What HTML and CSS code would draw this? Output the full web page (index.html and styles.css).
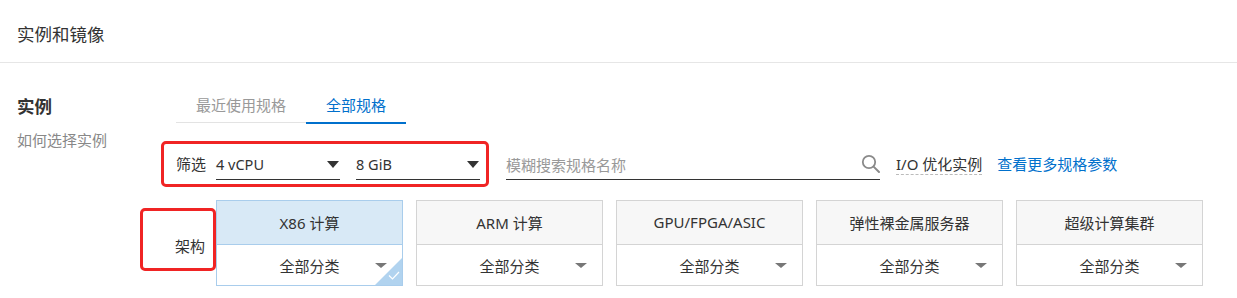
FILE: index.html
```html
<!DOCTYPE html>
<html lang="zh">
<head>
<meta charset="utf-8">
<title>实例和镜像</title>
<link rel="stylesheet" href="styles.css">
</head>
<body>
<header class="page-header">实例和镜像</header>
<main class="main">
  <aside class="side">
    <div class="side-title">实例</div>
    <div class="side-sub">如何选择实例</div>
  </aside>
  <section class="content">
    <nav class="tabs">
      <span class="tab">最近使用规格</span>
      <span class="tab active">全部规格</span>
    </nav>
    <div class="filter-row">
      <div class="filter-box">
        <span class="filter-label">筛选</span>
        <div class="select"><span>4 vCPU</span><i class="caret"></i></div>
        <div class="select"><span>8 GiB</span><i class="caret"></i></div>
      </div>
      <div class="search">
        <span class="placeholder">模糊搜索规格名称</span>
        <svg class="search-icon" width="20" height="20" viewBox="0 0 20 20"><circle cx="8" cy="8" r="6.2" fill="none" stroke="#8a8a8a" stroke-width="1.8"/><line x1="12.6" y1="12.6" x2="18" y2="18" stroke="#8a8a8a" stroke-width="2" stroke-linecap="round"/></svg>
      </div>
      <span class="io-link">I/O 优化实例</span>
      <span class="more-link">查看更多规格参数</span>
    </div>
    <div class="arch-row">
      <div class="arch-label">架构</div>
      <div class="cards">
        <div class="card selected">
          <div class="card-top">X86 计算</div>
          <div class="card-bottom"><span>全部分类</span><i class="caret small"></i></div>
          <span class="corner"><svg width="12" height="9" viewBox="0 0 12 9"><polyline points="1,4.5 4.5,8 11,1" fill="none" stroke="#fff" stroke-width="1.2"/></svg></span>
        </div>
        <div class="card">
          <div class="card-top">ARM 计算</div>
          <div class="card-bottom"><span>全部分类</span><i class="caret small"></i></div>
        </div>
        <div class="card">
          <div class="card-top">GPU/FPGA/ASIC</div>
          <div class="card-bottom"><span>全部分类</span><i class="caret small"></i></div>
        </div>
        <div class="card">
          <div class="card-top">弹性裸金属服务器</div>
          <div class="card-bottom"><span>全部分类</span><i class="caret small"></i></div>
        </div>
        <div class="card">
          <div class="card-top">超级计算集群</div>
          <div class="card-bottom"><span>全部分类</span><i class="caret small"></i></div>
        </div>
      </div>
    </div>
  </section>
</main>
</body>
</html>
```

FILE: styles.css
```css
* { box-sizing: border-box; }
html, body { margin: 0; padding: 0; background: #fff; }
body {
  font-family: "Segoe UI", "Noto Sans", "Noto Sans CJK SC", sans-serif;
  font-size: 15px;
  color: #333;
  width: 1237px;
  height: 298px;
  overflow: hidden;
}
.page-header {
  height: 63px;
  padding: 21px 0 0 17px;
  font-size: 17.5px;
  line-height: 26px;
  color: #333;
  border-bottom: 1px solid #e6e6e6;
}
.main { display: flex; }
.side { width: 176px; padding-left: 17px; padding-top: 30px; }
.side-title { font-size: 17.5px; font-weight: bold; line-height: 26px; color: #333; }
.side-sub { margin-top: 11px; font-size: 15px; line-height: 20px; color: #888; }
.content { flex: 1; padding-top: 25px; }
.tabs {
  display: flex;
  width: 230px;
  border-bottom: 1px solid #e3e3e3;
  height: 35px;
}
.tab {
  padding: 0 20px;
  line-height: 34px;
  height: 36px;
  color: #999;
  font-size: 15px;
}
.tab.active { color: #0070cc; border-bottom: 2px solid #0070cc; }
.filter-row {
  display: flex;
  align-items: center;
  margin-top: 18px;
  height: 46px;
}
.filter-box {
  display: flex;
  align-items: center;
  height: 46px;
  margin-left: -15px;
  padding: 0 6px 0 12px;
  border: 3px solid #f02424;
  border-radius: 5px;
}
.filter-label { margin-right: 10px; font-size: 15px; color: #333; padding-bottom: 2px; }
.select {
  width: 124px;
  height: 28px;
  margin-top: 4px;
  display: flex;
  align-items: center;
  justify-content: space-between;
  border-bottom: 1px solid #333;
  padding-bottom: 3px;
  font-size: 14.5px;
  color: #333;
}
.select + .select { margin-left: 16px; }
.caret {
  display: inline-block;
  width: 0; height: 0;
  border-left: 6.5px solid transparent;
  border-right: 6.5px solid transparent;
  border-top: 7px solid #333;
  margin-right: 1px;
}
.caret.small { border-left-width: 6px; border-right-width: 6px; border-top-width: 5px; border-top-color: #777; }
.search {
  margin-left: 17px;
  width: 374px;
  height: 28px;
  margin-top: 4px;
  border-bottom: 1.5px solid #333;
  display: flex;
  align-items: center;
  justify-content: space-between;
  padding-bottom: 3px;
}
.placeholder { color: #999; font-size: 15px; }
.search-icon { margin-right: -1px; }
.io-link {
  margin-left: 16px;
  font-size: 15px;
  color: #333;
  border-bottom: 1px dashed #bbb;
  line-height: 20px;
  margin-top: 0;
}
.more-link { margin-left: 15px; color: #0070cc; font-size: 15px; padding-bottom: 2px; }
.arch-row { display: flex; margin-top: 13px; }
.arch-label {
  width: 76px;
  height: 63px;
  margin-left: -36px;
  margin-top: 8px;
  border: 3px solid #f02424;
  border-radius: 5px;
  display: flex;
  align-items: flex-end;
  justify-content: flex-end;
  padding: 0 8px 12px 0;
  font-size: 15px;
  color: #333;
}
.cards { display: flex; gap: 13px; }
.card {
  position: relative;
  width: 187px;
  height: 86px;
  border: 1px solid #d4d4d4;
  display: flex;
  flex-direction: column;
  overflow: hidden;
}
.card-top {
  height: 44px;
  background: #f7f7f7;
  border-bottom: 1px solid #d4d4d4;
  display: flex;
  align-items: center;
  justify-content: center;
  font-size: 15px;
  color: #333;
  padding-bottom: 1px;
}
.card-bottom {
  flex: 1;
  display: flex;
  align-items: center;
  justify-content: center;
  position: relative;
  font-size: 15px;
  color: #333;
}
.card-bottom .caret { position: absolute; right: 14px; top: 18px; }
.card.selected { border-color: #a9cdec; }
.card.selected .card-top { background: #d8e9f6; border-bottom-color: #a9cdec; }
.corner {
  position: absolute;
  right: 0;
  bottom: 0;
  width: 0;
  height: 0;
  border-left: 27px solid transparent;
  border-bottom: 27px solid #b1d3ef;
}
.corner svg { position: absolute; left: -14px; top: 13px; }
```
